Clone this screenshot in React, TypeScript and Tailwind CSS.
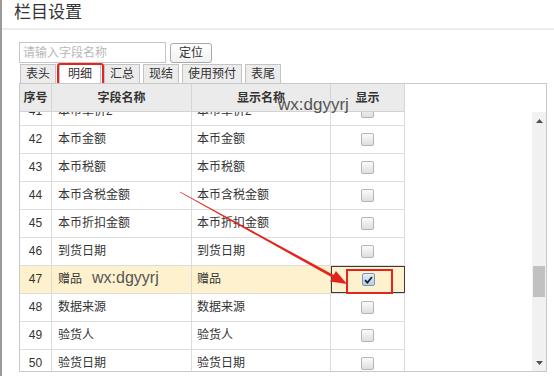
import React from 'react';

interface FieldRow {
  no: number;
  field: string;
  display: string;
  checked?: boolean;
  mark?: boolean;
}

const rows: FieldRow[] = [
  { no: 41, field: '本币单价2', display: '本币单价2' },
  { no: 42, field: '本币金额', display: '本币金额' },
  { no: 43, field: '本币税额', display: '本币税额' },
  { no: 44, field: '本币含税金额', display: '本币含税金额' },
  { no: 45, field: '本币折扣金额', display: '本币折扣金额' },
  { no: 46, field: '到货日期', display: '到货日期' },
  { no: 47, field: '赠品', display: '赠品', checked: true, mark: true },
  { no: 48, field: '数据来源', display: '数据来源' },
  { no: 49, field: '验货人', display: '验货人' },
  { no: 50, field: '验货日期', display: '验货日期' },
];

const tabs = ['表头', '明细', '汇总', '现结', '使用预付', '表尾'];

const Checkbox: React.FC<{ checked?: boolean }> = ({ checked }) =>
  checked ? (
    <span className="flex h-[13px] w-[13px] items-center justify-center rounded-[2px] border border-[#7a95bd] bg-gradient-to-b from-[#e4eefb] to-[#b9cdea]">
      <svg width="9" height="8" viewBox="0 0 9 8">
        <path d="M1 4.2 L3.4 6.6 L8 1" fill="none" stroke="#222" strokeWidth="1.8" />
      </svg>
    </span>
  ) : (
    <span className="h-[13px] w-[13px] rounded-[2px] border border-[#b4b4b4] bg-gradient-to-b from-[#fbfbfb] to-[#dedede]" />
  );

const App: React.FC = () => {
  return (
    <div className="relative h-[376px] w-[554px] overflow-hidden border-l-2 border-[#9a9a9a] bg-white font-['Liberation_Sans','Noto_Sans_CJK_SC',sans-serif] text-[#333]">
      <div className="h-[30px] border-b-2 border-[#ededed] pl-[12px] pt-[1px] text-[17px] leading-[24px] text-[#333]">
        栏目设置
      </div>

      <div className="pl-[17px] pt-[12px]">
        <div className="flex items-center gap-[4px]">
          <div className="flex h-[21px] w-[147px] items-center border border-[#c6c6c6] px-[3px] text-[12px] text-[#b8b8b8]">
            请输入字段名称
          </div>
          <div className="flex h-[20px] w-[42px] items-center justify-center rounded-[3px] border border-[#a9a9a9] bg-gradient-to-b from-white to-[#f1f1f1] text-[12px]">
            定位
          </div>
        </div>

        <div className="mt-[1px] flex h-[19px] gap-[3px] pl-[1px]">
          {tabs.map((t) => (
            <div
              key={t}
              className={
                t === '明细'
                  ? 'relative flex h-[19px] w-[42px] items-center justify-center border border-b-0 border-[#c4c4c4] bg-white text-[12px]'
                  : 'flex h-[19px] items-center justify-center border border-b-0 border-[#c4c4c4] bg-[#ececec] px-[5px] text-[12px]'
              }
            >
              {t}
              {t === '明细' && (
                <span className="absolute left-[-3px] top-[-2px] h-[25px] w-[47px] rounded-[3px] border-2 border-[#e5251c]" />
              )}
            </div>
          ))}
        </div>

        <div className="relative h-[289px] w-[528px] border border-[#c8c8c8]">
          <div className="flex h-[28px] w-[385px] border-b border-[#d2d2d2] bg-[#ebebeb] text-[12px] font-bold leading-[28px]">
            <div className="w-[32px] border-r border-[#d6d6d6] text-center">序号</div>
            <div className="w-[140px] border-r border-[#d6d6d6] text-center">字段名称</div>
            <div className="w-[139px] border-r border-[#d6d6d6] text-center">显示名称</div>
            <div className="w-[74px] border-r border-[#d6d6d6] text-center">显示</div>
          </div>

          <div className="flex h-[259px]">
            <div className="flex-1 overflow-hidden">
              <div className="-mt-[14px] w-[385px]">
                {rows.map((r) => (
                  <div
                    key={r.no}
                    className={
                      r.mark
                        ? 'flex h-[28px] border-b border-[#dcdcdc] bg-[#fdf2cd] text-[12px] leading-[27px]'
                        : 'flex h-[28px] border-b border-[#dcdcdc] text-[12px] leading-[27px]'
                    }
                  >
                    <div className="w-[32px] border-r border-[#dcdcdc] text-center">{r.no}</div>
                    <div className="w-[140px] border-r border-[#dcdcdc] pl-[6px]">
                      {r.field}
                      {r.mark && (
                        <span className="ml-[10px] text-[16px] leading-[22px] text-[#555]">wx:dgyyrj</span>
                      )}
                    </div>
                    <div className="w-[139px] border-r border-[#dcdcdc] pl-[5px]">{r.display}</div>
                    <div
                      className={
                        r.mark
                          ? 'relative flex w-[74px] items-center justify-center border border-[#3a3a3a]'
                          : 'flex w-[74px] items-center justify-center border-r border-[#dcdcdc]'
                      }
                    >
                      <Checkbox checked={r.checked} />
                      {r.mark && (
                        <span className="absolute left-[14px] top-[2px] h-[25px] w-[47px] border-2 border-[#e5251c]" />
                      )}
                    </div>
                  </div>
                ))}
              </div>
            </div>

            <div className="flex w-[14px] flex-col bg-[#f1f1f1]">
              <div className="flex h-[17px] items-center justify-center">
                <svg width="7" height="4" viewBox="0 0 7 4">
                  <path d="M0 4 L3.5 0 L7 4 Z" fill="#505050" />
                </svg>
              </div>
              <div className="ml-[1px] mt-[137px] h-[31px] w-[12px] bg-[#c1c1c1]" />
              <div className="flex-1" />
              <div className="flex h-[17px] items-center justify-center">
                <svg width="7" height="4" viewBox="0 0 7 4">
                  <path d="M0 0 L7 0 L3.5 4 Z" fill="#505050" />
                </svg>
              </div>
            </div>
          </div>
        </div>
      </div>

      <span className="absolute left-[276px] top-[95px] text-[17px] leading-[20px] text-[#555]">wx:dgyyrj</span>

      <svg className="pointer-events-none absolute left-[-2px] top-0" width="554" height="376">
        <polygon
          points="179.8,192.35 180.2,191.65 333.7,275.0 335.9,271.0 347,284 330.1,281.6 332.3,277.6"
          fill="#e5231b"
        />
      </svg>
    </div>
  );
};

export default App;
